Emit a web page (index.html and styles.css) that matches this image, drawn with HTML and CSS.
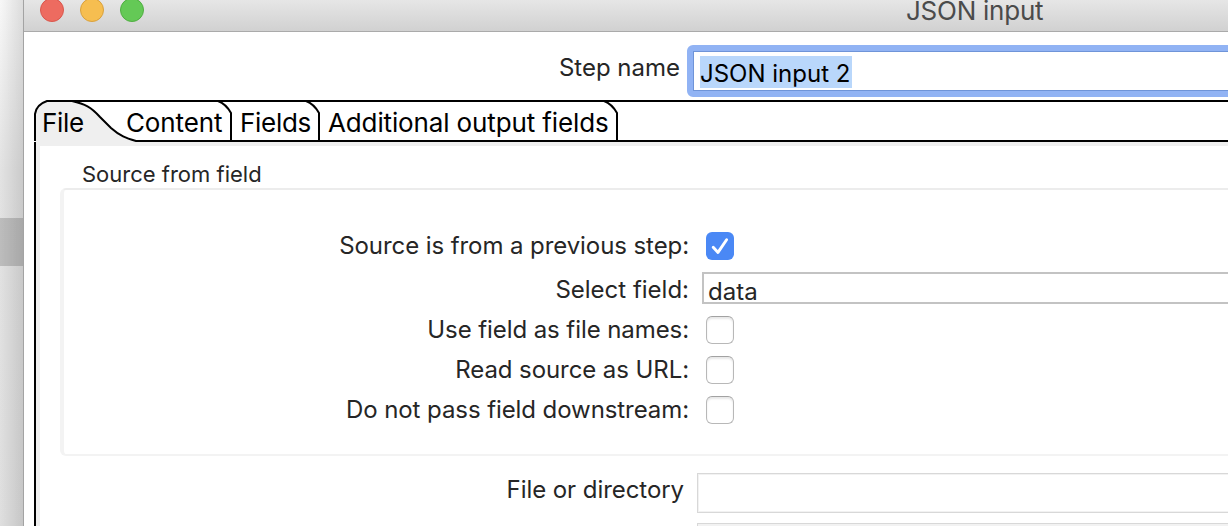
FILE: index.html
```html
<!DOCTYPE html>
<html lang="en">
<head>
<meta charset="utf-8">
<title>JSON input</title>
<link rel="stylesheet" href="styles.css">
</head>
<body>
<div class="desktop"><div class="desktop-band"></div></div>
<main class="window">
  <header class="titlebar">
    <div class="lights"><i class="light red"></i><i class="light yellow"></i><i class="light green"></i></div>
    <h1 class="title">JSON input</h1>
  </header>
  <div class="step">
    <label class="label step-label">Step name</label>
    <div class="step-field"><span class="selection">JSON input 2</span></div>
  </div>
  <nav class="tabs">
    <svg class="tab-lines" width="1194" height="42" viewBox="0 0 1194 42">
      <path d="M1 45V16C1 8 7 3 13 1H38C52 4 60 11 66 17L82 32C88 37 94 39 102 41V45Z" fill="#efefef"/>
      <g fill="none" stroke="#000" stroke-width="2">
        <path d="M1 41V14C2 7 7 3 13 1H1194"/>
        <path d="M38 1C51 4 57 7 66 17L77 28C86 36 92 38 102 41H1194"/>
        <path d="M184 1Q192 4 197 13V41M272 1Q280 4 285 13V41M570 1Q578 4 583 13V41"/>
      </g>
    </svg>
    <span class="tab tab-file">File</span>
    <span class="tab tab-content">Content</span>
    <span class="tab tab-fields">Fields</span>
    <span class="tab tab-output">Additional output fields</span>
  </nav>
  <section class="pane">
    <h2 class="group-title">Source from field</h2>
    <div class="group">
      <div class="row"><label class="label">Source is from a previous step:</label>
        <span class="check checked"><svg width="28" height="28" viewBox="0 0 28 28"><path d="M7.2 15.2L12 20.4L20.6 7.8" fill="none" stroke="#fff" stroke-width="2.9" stroke-linecap="round" stroke-linejoin="round"/></svg></span></div>
      <div class="row row-select"><label class="label">Select field:</label><div class="select">data</div></div>
      <div class="row"><label class="label">Use field as file names:</label><span class="check"></span></div>
      <div class="row"><label class="label">Read source as URL:</label><span class="check"></span></div>
      <div class="row"><label class="label">Do not pass field downstream:</label><span class="check"></span></div>
    </div>
    <div class="file-row"><label class="label">File or directory</label><div class="file-field"></div></div>
    <div class="file-field next-field"></div>
  </section>
</main>
</body>
</html>
```
FILE: styles.css
```css
* { box-sizing: border-box; }
body {
  margin: 0; width: 1228px; height: 526px; overflow: hidden; display: flex;
  background: #fff; color: #262626; font-family: Inter, "Liberation Sans", sans-serif;
  font-size: 24px; line-height: 30px; white-space: nowrap;
}
.desktop {
  flex: 0 0 24px; height: 526px; padding-top: 218px; border-right: 1px solid #a3a3a3;
  background: linear-gradient(90deg, rgba(0,0,0,0), rgba(0,0,0,.11)), linear-gradient(#f8f8f8, #e3e3e3 170px, #dfdfdf);
}
.desktop-band { height: 48px; background: rgba(0,0,0,.165); }
.window { flex: 0 0 1204px; height: 526px; overflow: hidden; display: flex; flex-direction: column; }
.titlebar {
  flex: 0 0 32px; display: flex; border-bottom: 1px solid #aaa;
  background: linear-gradient(#e6e6e6, #d1d1d1);
}
.lights { display: flex; gap: 16px; margin: -2px 0 0 16px; }
.light { width: 24px; height: 24px; border-radius: 50%; border: 1px solid; }
.red { background: #ed6b60; border-color: #d9574d; }
.yellow { background: #f6be50; border-color: #d9a13d; }
.green { background: #64c956; border-color: #50ae42; }
.title { margin: 0 0 0 762px; font-size: 26px; line-height: 22px; letter-spacing: -.25px; font-weight: 400; color: #4b4b4b; }
.step { flex: 0 0 68px; display: flex; }
.step-label { width: 656px; padding-top: 21px; }
.label { text-align: right; }
.step-field {
  flex: 1; height: 52px; margin: 13px -20px 0 7px; padding: 5px 0 0 7px;
  border: 6px solid #91b3f4; border-radius: 6px; box-shadow: inset 0 0 0 1px #6f94d8; color: #000;
}
.selection { display: block; width: 152px; height: 32px; line-height: 35px; background: #b9d7fb; }
.tabs { position: relative; z-index: 1; flex: 0 0 42px; margin-left: 10px; display: flex; color: #000; font-size: 26px; line-height: 32px; padding-top: 7px; letter-spacing: -.13px; }
.tab-lines { position: absolute; left: 0; top: 0; }
.tab { position: relative; }
.tab-file { width: 84px; padding-left: 8px; letter-spacing: -.3px; }
.tab-content { width: 114px; padding-left: 8px; }
.tab-fields { width: 88px; padding-left: 8px; letter-spacing: -.3px; }
.tab-output { padding-left: 8px; }
.pane {
  flex: 1; margin-left: 10px; border-left: 2px solid #000;
  box-shadow: inset 4px 4px 0 #efefef; padding-top: 18px;
}
.group-title { margin: 0 0 0 46px; font-size: 22px; line-height: 28px; font-weight: 400; }
.group {
  height: 268px; margin: 0 -20px 0 24px; padding-top: 36px;
  border: 2px solid #f3f3f3; border-left-width: 4px; border-top-color: #ececec; border-radius: 6px;
}
.row { height: 40px; display: flex; align-items: center; letter-spacing: -.08px; }
.row .label { width: 625px; margin-right: 17px; }
.row-select { margin-top: 4px; }
.row-select .label { margin-right: 13px; letter-spacing: 0; }
.select { flex: 1; height: 32px; margin-top: -4px; border: 2px solid #c3c3c3; padding-left: 4px; line-height: 35px; letter-spacing: 0; }
.check {
  width: 28px; height: 28px; border: 1px solid #b8b8b8; border-top-color: #a2a2a2; border-radius: 6px;
  box-shadow: inset 0 2px 2px #e8e8e8;
}
.checked { border: 0; background: #4a88f5; box-shadow: none; }
.checked svg { display: block; }
.file-row { display: flex; margin-top: 17px; }
.file-row .label { width: 648px; margin: 2px 13px 0 0; letter-spacing: -.06px; }
.file-field { flex: 1; height: 40px; margin-right: -20px; border: 1px solid #d8d8d8; box-shadow: inset 0 0 0 1px #f2f2f2; }
.next-field { height: 3px; margin: 10px -20px 0 661px; border-bottom: 0; }
```
